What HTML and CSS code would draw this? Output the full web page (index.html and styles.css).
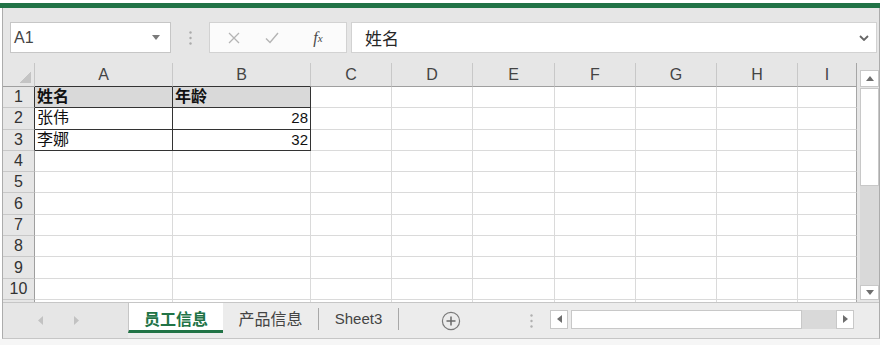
FILE: index.html
```html
<!DOCTYPE html>
<html lang="zh-CN">
<head>
    <meta charset="UTF-8">
    <title>员工信息 - 工作簿</title>
    <link rel="stylesheet" href="styles.css">
</head>
<body>
    <div class="app">
        <div class="accent"></div>
        <div class="frame">
            <div class="formula-bar">
                <div class="name-box">
                    <span>A1</span>
                    <svg width="8" height="5" viewBox="0 0 8 5"><path d="M0 0h8L4 5z" fill="#7a7a7a"/></svg>
                </div>
                <div class="grip">
                    <svg width="3" height="14" viewBox="0 0 3 14"><circle cx="1.5" cy="1.5" r="1.2" fill="#ababab"/><circle cx="1.5" cy="7" r="1.2" fill="#ababab"/><circle cx="1.5" cy="12.5" r="1.2" fill="#ababab"/></svg>
                </div>
                <div class="fx-buttons">
                    <span class="fx-slot fx-cancel">
                        <svg width="12" height="12" viewBox="0 0 12 12"><path d="M1 1l10 10M11 1L1 11" stroke="#b4b4b4" stroke-width="1.3" fill="none"/></svg>
                    </span>
                    <span class="fx-slot fx-enter">
                        <svg width="14" height="12" viewBox="0 0 14 12"><path d="M1 6.5l4 4L13 1" stroke="#b4b4b4" stroke-width="1.4" fill="none"/></svg>
                    </span>
                    <span class="fx-slot fx-func"><i>f</i><sub>x</sub></span>
                </div>
                <div class="formula-input">
                    <span>姓名</span>
                    <svg width="10" height="6" viewBox="0 0 10 6"><path d="M1 1l4 4 4-4" stroke="#666" stroke-width="1.8" fill="none"/></svg>
                </div>
            </div>

            <div class="sheet-area">
                <div class="grid">
                    <div class="corner"><span class="corner-tri"></span></div>
                    <div class="ch box-top">A</div>
                    <div class="ch box-top">B</div>
                    <div class="ch">C</div>
                    <div class="ch">D</div>
                    <div class="ch">E</div>
                    <div class="ch">F</div>
                    <div class="ch">G</div>
                    <div class="ch">H</div>
                    <div class="ch">I</div>

                    <div class="rh box-side">1</div>
                    <div class="c head box">姓名</div>
                    <div class="c head box">年龄</div>
                    <div class="c"></div><div class="c"></div><div class="c"></div><div class="c"></div><div class="c"></div><div class="c"></div><div class="c"></div>

                    <div class="rh box-side">2</div>
                    <div class="c box">张伟</div>
                    <div class="c box num">28</div>
                    <div class="c"></div><div class="c"></div><div class="c"></div><div class="c"></div><div class="c"></div><div class="c"></div><div class="c"></div>

                    <div class="rh box-side">3</div>
                    <div class="c box">李娜</div>
                    <div class="c box num">32</div>
                    <div class="c"></div><div class="c"></div><div class="c"></div><div class="c"></div><div class="c"></div><div class="c"></div><div class="c"></div>

                    <div class="rh">4</div>
                    <div class="c"></div><div class="c"></div><div class="c"></div><div class="c"></div><div class="c"></div><div class="c"></div><div class="c"></div><div class="c"></div><div class="c"></div>
                    <div class="rh">5</div>
                    <div class="c"></div><div class="c"></div><div class="c"></div><div class="c"></div><div class="c"></div><div class="c"></div><div class="c"></div><div class="c"></div><div class="c"></div>
                    <div class="rh">6</div>
                    <div class="c"></div><div class="c"></div><div class="c"></div><div class="c"></div><div class="c"></div><div class="c"></div><div class="c"></div><div class="c"></div><div class="c"></div>
                    <div class="rh">7</div>
                    <div class="c"></div><div class="c"></div><div class="c"></div><div class="c"></div><div class="c"></div><div class="c"></div><div class="c"></div><div class="c"></div><div class="c"></div>
                    <div class="rh">8</div>
                    <div class="c"></div><div class="c"></div><div class="c"></div><div class="c"></div><div class="c"></div><div class="c"></div><div class="c"></div><div class="c"></div><div class="c"></div>
                    <div class="rh">9</div>
                    <div class="c"></div><div class="c"></div><div class="c"></div><div class="c"></div><div class="c"></div><div class="c"></div><div class="c"></div><div class="c"></div><div class="c"></div>
                    <div class="rh">10</div>
                    <div class="c"></div><div class="c"></div><div class="c"></div><div class="c"></div><div class="c"></div><div class="c"></div><div class="c"></div><div class="c"></div><div class="c"></div>
                    <div class="rh"></div>
                    <div class="c"></div><div class="c"></div><div class="c"></div><div class="c"></div><div class="c"></div><div class="c"></div><div class="c"></div><div class="c"></div><div class="c"></div>
                </div>

                <div class="vscroll">
                    <div class="vs-btn up">
                        <svg width="8" height="5" viewBox="0 0 8 5"><path d="M0 5h8L4 0z" fill="#6e6e6e"/></svg>
                    </div>
                    <div class="vs-thumb"></div>
                    <div class="vs-track"></div>
                    <div class="vs-btn down">
                        <svg width="8" height="5" viewBox="0 0 8 5"><path d="M0 0h8L4 5z" fill="#6e6e6e"/></svg>
                    </div>
                </div>
            </div>

            <div class="tab-bar">
                <div class="sheet-nav">
                    <svg class="nav-prev" width="5" height="9" viewBox="0 0 5 9"><path d="M5 0v9L0 4.5z" fill="#c2c2c2"/></svg>
                    <svg class="nav-next" width="5" height="9" viewBox="0 0 5 9"><path d="M0 0v9L5 4.5z" fill="#c2c2c2"/></svg>
                </div>
                <div class="tab active">员工信息</div>
                <div class="tab tab-2">产品信息</div>
                <span class="tab-sep"></span>
                <div class="tab tab-3">Sheet3</div>
                <span class="tab-sep"></span>
                <svg class="add-sheet" width="20" height="20" viewBox="0 0 20 20">
                    <circle cx="10" cy="10" r="8.6" stroke="#7a7a7a" stroke-width="1.2" fill="none"/>
                    <path d="M10 5.5v9M5.5 10h9" stroke="#6a6a6a" stroke-width="1.5"/>
                </svg>
                <svg class="split-grip" width="3" height="14" viewBox="0 0 3 14"><circle cx="1.5" cy="1.5" r="1.2" fill="#b0b0b0"/><circle cx="1.5" cy="7" r="1.2" fill="#b0b0b0"/><circle cx="1.5" cy="12.5" r="1.2" fill="#b0b0b0"/></svg>
                <div class="hscroll">
                    <div class="hs-btn">
                        <svg width="5" height="8" viewBox="0 0 5 8"><path d="M5 0v8L0 4z" fill="#6e6e6e"/></svg>
                    </div>
                    <div class="hs-thumb"></div>
                    <div class="hs-track"></div>
                    <div class="hs-btn">
                        <svg width="5" height="8" viewBox="0 0 5 8"><path d="M0 0v8L5 4z" fill="#6e6e6e"/></svg>
                    </div>
                </div>
            </div>
        </div>
        <div class="status"></div>
    </div>
</body>
</html>
```

FILE: styles.css
```css
* {
    box-sizing: border-box;
}
body {
    margin: 0;
    font-family: "Liberation Sans", "Noto Sans CJK SC", sans-serif;
    background: #fff;
}
.app {
    width: 880px;
}
.accent {
    height: 5px;
    margin-top: 3px;
    background: #217346;
}
.frame {
    margin-left: 2px;
    width: 878px;
    border-left: 1px solid #acacac;
    border-right: 1px solid #acacac;
    border-bottom: 1px solid #c6c6c6;
    background: #e6e6e6;
}

/* formula bar */
.formula-bar {
    display: flex;
    align-items: center;
    height: 55px;
    padding: 14px 2px 10px 7px;
}
.name-box {
    display: flex;
    align-items: center;
    justify-content: space-between;
    width: 161px;
    height: 31px;
    padding: 0 10px 0 3px;
    background: #fff;
    border: 1px solid #c6c6c6;
    font-size: 16px;
    color: #444;
}
.grip {
    display: flex;
    justify-content: center;
    width: 38px;
}
.fx-buttons {
    display: flex;
    align-items: center;
    width: 138px;
    height: 31px;
    background: #fbfbfb;
    border: 1px solid #d2d2d2;
}
.fx-slot {
    display: flex;
    justify-content: center;
    align-items: center;
}
.fx-cancel {
    width: 48px;
}
.fx-enter {
    width: 28px;
}
.fx-func {
    width: 56px;
    margin-left: auto;
    font-family: "Liberation Serif", serif;
    color: #4a4a4a;
    font-size: 16px;
}
.fx-func sub {
    font-size: 11px;
    font-style: italic;
    vertical-align: -1px;
}
.formula-input {
    flex: 1;
    display: flex;
    align-items: center;
    justify-content: space-between;
    height: 31px;
    margin-left: 4px;
    padding: 0 7px 0 13px;
    background: #fff;
    border: 1px solid #d2d2d2;
    font-size: 17px;
    color: #262626;
}

/* grid */
.sheet-area {
    display: flex;
    height: 239px;
    overflow: hidden;
}
.grid {
    display: grid;
    grid-template-columns: 32px 138px 138px 81px 81px 82px 81px 81px 81px 59px;
    grid-template-rows: 24px;
    grid-auto-rows: 21.3px;
    width: 854px;
    flex: none;
    background: #fff;
}
.grid > div:nth-child(10n) {
    border-right-color: #a6a6a6;
}
.corner {
    display: flex;
    justify-content: flex-end;
    align-items: flex-end;
    padding: 0 3px 3px 0;
    background: #e6e6e6;
    border-right: 1px solid #c6c6c6;
    border-bottom: 1px solid #9f9f9f;
}
.corner-tri {
    width: 11px;
    height: 11px;
    background: linear-gradient(to bottom right, transparent 50%, #c4c4c4 50%);
}
.ch {
    display: flex;
    align-items: center;
    justify-content: center;
    background: #e6e6e6;
    border-right: 1px solid #c8c8c8;
    border-bottom: 1px solid #9f9f9f;
    font-size: 16px;
    color: #444;
}
.ch.box-top {
    border-bottom-color: #333;
}
.rh {
    display: flex;
    align-items: center;
    justify-content: center;
    background: #e6e6e6;
    border-right: 1px solid #9f9f9f;
    border-bottom: 1px solid #c8c8c8;
    font-size: 16px;
    color: #333;
}
.rh.box-side {
    border-right-color: #333;
}
.c {
    display: flex;
    align-items: center;
    padding: 0 2px;
    border-right: 1px solid #dadada;
    border-bottom: 1px solid #dadada;
    font-size: 16px;
    line-height: 20px;
    color: #111;
    white-space: nowrap;
    overflow: hidden;
}
.c.head {
    background: #d9d9d9;
    font-weight: bold;
}
.c.box {
    border-color: #333;
}
.c.num {
    justify-content: flex-end;
    font-size: 15px;
}

/* vertical scrollbar */
.vscroll {
    display: flex;
    flex-direction: column;
    width: 19px;
    margin-left: 3px;
    padding: 7px 0 2px;
}
.vs-btn {
    display: flex;
    align-items: center;
    justify-content: center;
    background: #fff;
    border: 1px solid #c8c8c8;
}
.vs-btn.up {
    height: 17px;
}
.vs-btn.down {
    height: 15px;
}
.vs-thumb {
    height: 98px;
    margin-top: 1px;
    background: #fff;
    border: 1px solid #c8c8c8;
}
.vs-track {
    flex: 1;
    background: #d9d9d9;
}

/* sheet tabs */
.tab-bar {
    display: flex;
    align-items: center;
    height: 36px;
    border-top: 1px solid #c6c6c6;
    background: #ececec;
}
.sheet-nav {
    display: flex;
    align-items: center;
    align-self: stretch;
    width: 125px;
    background: #e6e6e6;
}
.nav-prev {
    margin-left: 35px;
}
.nav-next {
    margin-left: 31px;
}
.tab {
    display: flex;
    align-items: center;
    justify-content: center;
    align-self: flex-start;
    height: 30px;
    font-size: 16px;
    color: #444;
}
.tab.active {
    width: 95px;
    background: #fff;
    border-left: 1px solid #c6c6c6;
    border-bottom: 3px solid #217346;
    color: #217346;
    font-weight: bold;
    padding-top: 2px;
}
.tab-2 {
    width: 95px;
}
.tab-3 {
    width: 79px;
    font-size: 15px;
}
.tab-sep {
    width: 1px;
    height: 22px;
    margin-bottom: 3px;
    background: #a8a8a8;
}
.add-sheet {
    margin-left: 42px;
}
.split-grip {
    margin-left: 69px;
}
.hscroll {
    display: flex;
    width: 304px;
    height: 19px;
    margin-left: 17px;
    margin-bottom: 3px;
}
.hs-btn {
    display: flex;
    align-items: center;
    justify-content: center;
    width: 18px;
    background: #fff;
    border: 1px solid #c8c8c8;
}
.hs-thumb {
    width: 231px;
    margin-left: 3px;
    background: #fff;
    border: 1px solid #c8c8c8;
}
.hs-track {
    flex: 1;
    background: #d9d9d9;
}
.status {
    height: 6px;
    background: #f6f6f6;
}
```
